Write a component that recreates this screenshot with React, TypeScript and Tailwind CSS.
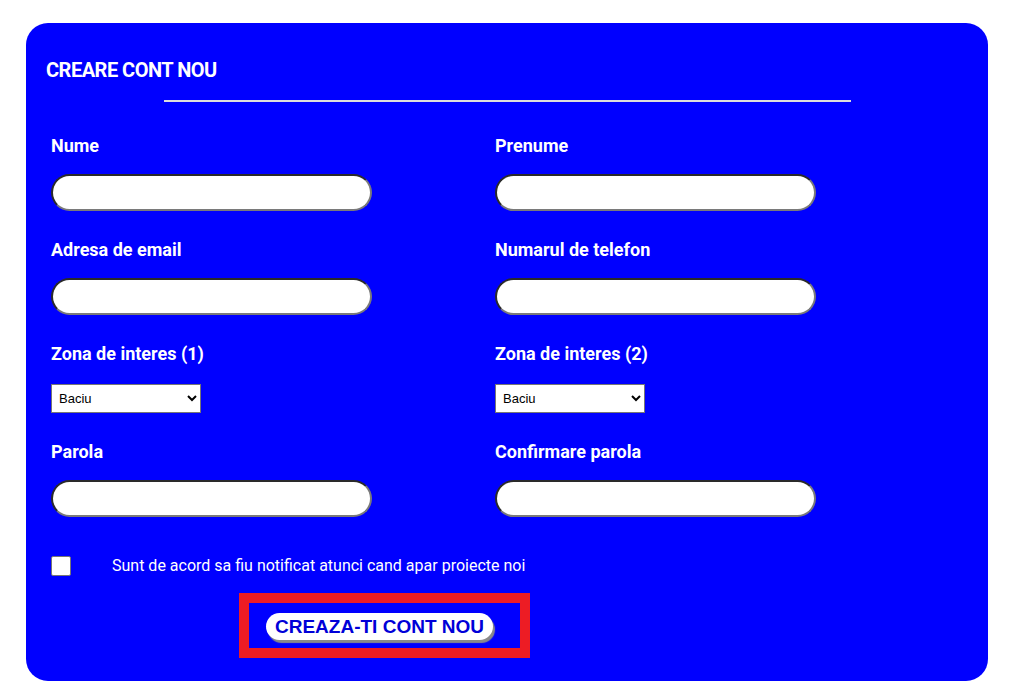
import React, { useState } from 'react';

const zone = ['Baciu', 'Floresti', 'Apahida', 'Cluj-Napoca'];

function Label({ children }: { children: React.ReactNode }) {
  return (
    <label className="block h-[21px] text-[18px] leading-[21px] font-bold tracking-[0px] text-white font-['Roboto',sans-serif]">
      {children}
    </label>
  );
}

function TextField({ label, type = 'text' }: { label: string; type?: string }) {
  return (
    <div className="mb-[28px]">
      <Label>{label}</Label>
      <input
        type={type}
        className="mt-[18px] block w-[321px] h-[37px] rounded-full bg-white px-4 border-2 border-t-[#2a2a2a] border-l-[#2a2a2a] border-b-[#7a7a7a] border-r-[#7a7a7a] outline-none"
      />
    </div>
  );
}

function ZoneField({ label }: { label: string }) {
  return (
    <div className="mb-[28px]">
      <Label>{label}</Label>
      <select className="mt-[20px] block w-[150px] h-[29px] bg-white border border-[#767676] text-[13px] text-black pl-[3px] font-['Liberation_Sans',Arial,sans-serif]">
        {zone.map((z) => (
          <option key={z}>{z}</option>
        ))}
      </select>
    </div>
  );
}

function App() {
  const [notify, setNotify] = useState(false);

  return (
    <div className="min-h-screen bg-white pt-[23px] pl-[26px]">
      <div className="w-[962px] h-[658px] rounded-[22px] bg-[#0000ff] pt-[35px] font-['Roboto',sans-serif]">
        {/* Header */}
        <h1 className="pl-[20px] text-[20px] leading-[24px] font-bold tracking-[-0.5px] text-white">
          CREARE CONT NOU
        </h1>
        <div className="mx-auto mt-[18px] w-[687px] h-[2px] bg-[#dcdcdc]" />

        {/* Form grid */}
        <div className="mt-[33px] pl-[25px] grid grid-cols-[444px_1fr]">
          <TextField label="Nume" />
          <TextField label="Prenume" />
          <TextField label="Adresa de email" type="email" />
          <TextField label="Numarul de telefon" type="tel" />
          <ZoneField label="Zona de interes (1)" />
          <ZoneField label="Zona de interes (2)" />
          <TextField label="Parola" type="password" />
          <TextField label="Confirmare parola" type="password" />
        </div>

        {/* Agreement */}
        <div className="mt-[9px] pl-[25px] flex items-center">
          <button
            type="button"
            onClick={() => setNotify(!notify)}
            className="w-[20px] h-[20px] bg-white border border-[#767676] rounded-[2px] flex items-center justify-center text-[14px] leading-none text-[#0000ff]"
          >
            {notify ? '✓' : ''}
          </button>
          <span className="ml-[41px] text-[16px] text-white">
            Sunt de acord sa fiu notificat atunci cand apar proiecte noi
          </span>
        </div>

        {/* Submit */}
        <div className="mt-[15px] ml-[213px] w-[291px] h-[65px] border-[10px] border-[#ed1c24] pt-[10px] pl-[17px]">
          <button
            type="submit"
            className="w-[227px] h-[27px] rounded-full bg-white shadow-[2px_3px_1px_#8a8a8a] text-[19px] leading-[27px] font-bold text-[#0000d8] font-['Liberation_Sans',Arial,sans-serif]"
          >
            CREAZA-TI CONT NOU
          </button>
        </div>
      </div>
    </div>
  );
}

export default App;
